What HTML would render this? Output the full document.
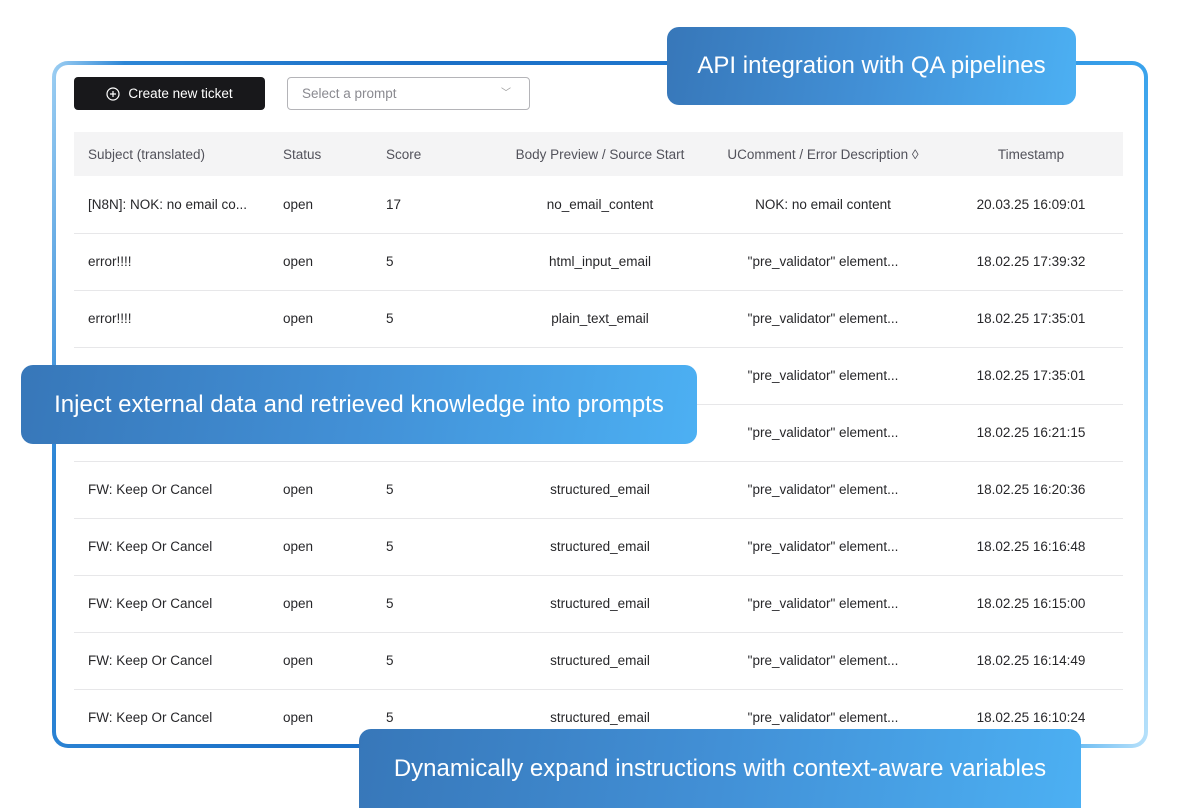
<!DOCTYPE html>
<html style="overflow:hidden"><head><meta charset="utf-8"><style>
*{margin:0;padding:0;box-sizing:border-box}
html,body{width:1200px;height:808px;overflow:hidden}
body{background:#fff;position:relative;font-family:"Liberation Sans",sans-serif;color:#27272a}
.frame{position:absolute;left:52px;top:61px;width:1096px;height:687px;border-radius:16px;padding:4px;background:linear-gradient(100deg,#9fd0f3 0%,#2d86d6 6%,#1b6fc6 30%,#1f78cf 60%,#3aa3ec 90%,#b9e2fb 100%)}
.inner{position:relative;width:100%;height:100%;background:#fff;border-radius:12px;overflow:hidden}
.btn{position:absolute;left:18px;top:12px;width:191px;height:33px;background:#18181b;border-radius:4px;color:#fff;font-size:13.5px;display:flex;align-items:center;justify-content:center;gap:8px}
.sel{position:absolute;left:231px;top:12px;width:243px;height:33px;border:1px solid #b4b4b8;border-radius:4px;color:#8a8a90;font-size:13.5px;padding-left:14px;line-height:31px}
.sel span{position:absolute;right:18px;top:0;font-size:10px;color:#999}
table{position:absolute;left:18px;top:67px;width:1049px;border-collapse:collapse;font-size:13.5px;table-layout:fixed}
th{height:44px;background:#f4f4f5;font-weight:normal;color:#52525b;text-align:left;white-space:nowrap}
td{height:57px;border-top:1px solid #e7e7e9;white-space:nowrap}
.c{text-align:center}
.call{position:absolute;border-radius:12px;background:linear-gradient(100deg,#3777b9 0%,#4290d6 50%,#4cb0f3 100%);color:#fff;font-size:24px;display:flex;align-items:center;justify-content:center;white-space:nowrap}
</style></head><body>
<div class="frame"><div class="inner">
<div class="btn"><svg width="14" height="14" viewBox="0 0 14 14"><circle cx="7" cy="7" r="6" fill="none" stroke="#fff" stroke-width="1.2"/><path d="M7 4v6M4 7h6" stroke="#fff" stroke-width="1.2"/></svg>Create new ticket</div>
<div class="sel">Select a prompt<span>﹀</span></div>
<table>
<colgroup><col style="width:209px"><col style="width:103px"><col style="width:107px"><col style="width:214px"><col style="width:232px"><col style="width:184px"></colgroup>
<tr><th style="padding-left:14px">Subject (translated)</th><th>Status</th><th>Score</th><th class="c">Body Preview / Source Start</th><th class="c">UComment / Error Description ◊</th><th class="c">Timestamp</th></tr>
<tr><td style="padding-left:14px;border-top:none">[N8N]: NOK: no email co...</td><td style="border-top:none">open</td><td style="border-top:none">17</td><td class="c" style="border-top:none">no_email_content</td><td class="c" style="border-top:none">NOK: no email content</td><td class="c" style="border-top:none">20.03.25 16:09:01</td></tr>
<tr><td style="padding-left:14px">error!!!!</td><td>open</td><td>5</td><td class="c">html_input_email</td><td class="c">"pre_validator" element...</td><td class="c">18.02.25 17:39:32</td></tr>
<tr><td style="padding-left:14px">error!!!!</td><td>open</td><td>5</td><td class="c">plain_text_email</td><td class="c">"pre_validator" element...</td><td class="c">18.02.25 17:35:01</td></tr>
<tr><td style="padding-left:14px">error!!!!</td><td>open</td><td>5</td><td class="c">plain_text_email</td><td class="c">"pre_validator" element...</td><td class="c">18.02.25 17:35:01</td></tr>
<tr><td style="padding-left:14px">error!!!!</td><td>open</td><td>5</td><td class="c">plain_text_email</td><td class="c">"pre_validator" element...</td><td class="c">18.02.25 16:21:15</td></tr>
<tr><td style="padding-left:14px">FW: Keep Or Cancel</td><td>open</td><td>5</td><td class="c">structured_email</td><td class="c">"pre_validator" element...</td><td class="c">18.02.25 16:20:36</td></tr>
<tr><td style="padding-left:14px">FW: Keep Or Cancel</td><td>open</td><td>5</td><td class="c">structured_email</td><td class="c">"pre_validator" element...</td><td class="c">18.02.25 16:16:48</td></tr>
<tr><td style="padding-left:14px">FW: Keep Or Cancel</td><td>open</td><td>5</td><td class="c">structured_email</td><td class="c">"pre_validator" element...</td><td class="c">18.02.25 16:15:00</td></tr>
<tr><td style="padding-left:14px">FW: Keep Or Cancel</td><td>open</td><td>5</td><td class="c">structured_email</td><td class="c">"pre_validator" element...</td><td class="c">18.02.25 16:14:49</td></tr>
<tr><td style="padding-left:14px">FW: Keep Or Cancel</td><td>open</td><td>5</td><td class="c">structured_email</td><td class="c">"pre_validator" element...</td><td class="c">18.02.25 16:10:24</td></tr>
</table>
</div></div>
<div class="call" style="left:667px;top:27px;width:409px;height:78px">API integration with QA pipelines</div>
<div class="call" style="left:21px;top:365px;width:676px;height:79px">Inject external data and retrieved knowledge into prompts</div>
<div class="call" style="left:359px;top:729px;width:722px;height:79px;border-radius:12px 12px 0 0">Dynamically expand instructions with context-aware variables</div>
</body></html>
